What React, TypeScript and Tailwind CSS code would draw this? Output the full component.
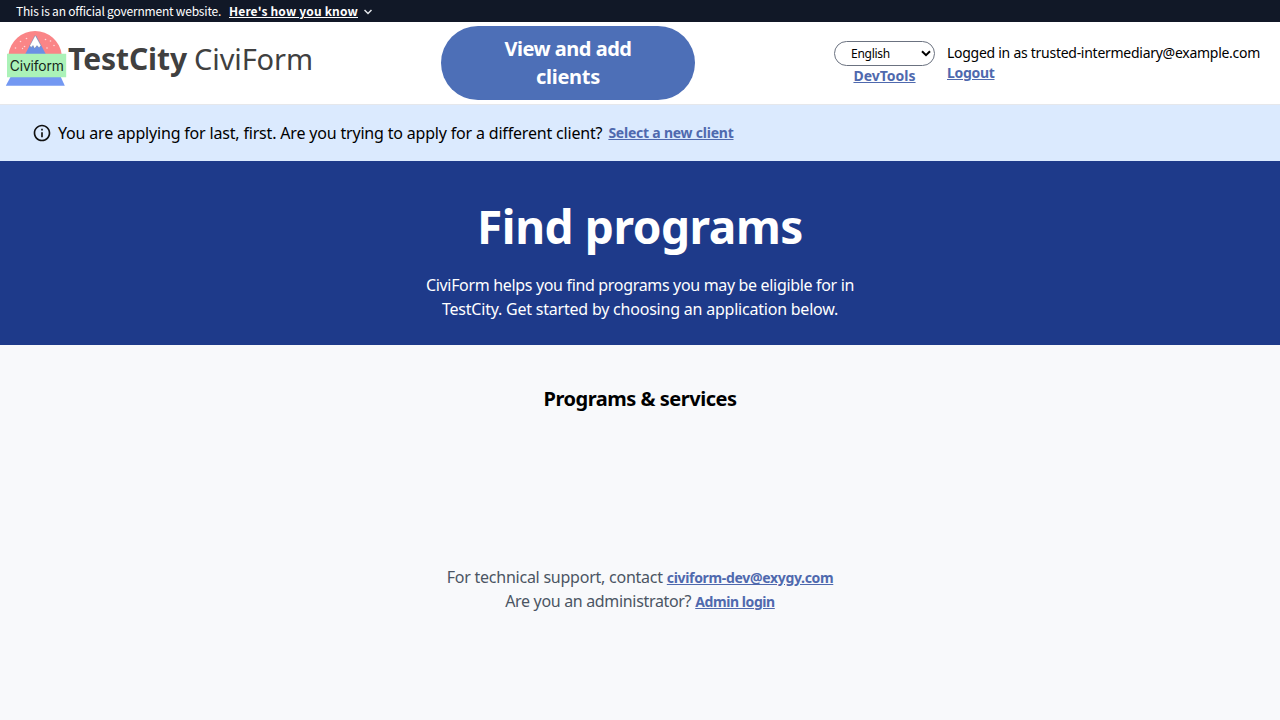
import type { ReactNode } from 'react'

function Link({ children, className = '' }: { children: ReactNode; className?: string }) {
  return (
    <a href="#" className={`text-sm font-bold text-[#4f69ae] underline ${className}`}>
      {children}
    </a>
  )
}

function Logo() {
  return (
    <svg width="68" height="64" viewBox="0 0 68 64" className="shrink-0" aria-hidden="true">
      <path d="M8.5 28.5a26.8 26.8 0 0 1 53.2 0z" fill="#fa8587" />
      <path d="M25 28.5 34.5 10.5q1-1.6 2 0L46 28.5z" fill="#6b90e4" />
      <path
        d="M35.3 9.3 29.8 19.6l1.2 2 2-2.2 1.6 3.2 2.4-3 2.1 2.2 1.8-2.2z"
        fill="#fff"
        stroke="#6b7280"
        strokeWidth="0.35"
      />
      <g fill="#fff" opacity="0.7">
        <circle cx="26.5" cy="12.5" r="0.8" />
        <circle cx="20.5" cy="15.5" r="0.8" />
        <circle cx="24.5" cy="20.5" r="0.8" />
        <circle cx="15.5" cy="22" r="0.8" />
        <circle cx="22.5" cy="22.5" r="0.7" />
        <circle cx="45.5" cy="13.5" r="0.8" />
        <circle cx="50.5" cy="15" r="0.8" />
        <circle cx="47" cy="22" r="0.8" />
        <circle cx="54" cy="19.5" r="0.8" />
      </g>
      <path d="M10.5 51h50.3l4 8.7H5.8z" fill="#7398f2" />
      <path d="M7 27.7h59.2v23.6H7z" fill="#abf2b8" />
      <text x="9.8" y="45.3" fontSize="13.8" textLength="54" fontFamily="Inter, sans-serif" fill="#16281b">
        Civiform
      </text>
    </svg>
  )
}

export default function App() {
  return (
    <div className="flex min-h-screen w-full flex-col bg-[#f8f9fb] font-['Noto_Sans',sans-serif] text-base text-black">
      <div className="flex h-[22px] items-center bg-[#111827] pl-4 font-['Noto_Sans_CJK_SC','Noto_Sans',sans-serif] text-xs text-white">
        <span className="w-[213px] whitespace-nowrap tracking-[-0.2px]">This is an official government website.</span>
        <button className="whitespace-nowrap font-bold tracking-[0.16px] underline">Here's how you know</button>
        <svg width="8" height="6" viewBox="0 0 8 6" fill="none" stroke="#e5e7eb" strokeWidth="1.5" className="ml-1.5 mt-0.5">
          <path d="M.5 1 4 4.5 7.5 1" />
        </svg>
      </div>

      <header className="flex h-[83px] border-b border-[#e5e7eb] bg-white">
        <div className="flex w-[441px] items-start pt-1">
          <Logo />
          <h1 className="whitespace-nowrap pt-[13px] text-[30px] leading-[40px] text-[#404040]">
            <span className="font-bold tracking-[-0.07px]">TestCity</span>
            <span className="ml-[7px] text-[29px] font-normal tracking-[-0.1px]">CiviForm</span>
          </h1>
        </div>
        <button className="mt-1 h-[74px] w-[254px] rounded-[37px] bg-[#4d6fb7] text-xl leading-7 font-bold text-white">
          <span className="block tracking-[-0.49px]">View and add</span>
          <span className="block tracking-[-0.27px]">clients</span>
        </button>
        <div className="ml-[139px] flex w-[101px] flex-col items-center pt-[19px]">
          <div className="flex h-[25px] w-full items-center justify-between rounded-full border border-[#6b7280] pr-[3px] pl-4 text-xs">
            <span className="tracking-[-0.26px]">English</span>
            <svg width="10" height="7" viewBox="0 0 10 7" fill="none" stroke="#000" strokeWidth="2">
              <path d="M1 1.2 5 5.2 9 1.2" />
            </svg>
          </div>
          <Link className="leading-5">DevTools</Link>
        </div>
        <div className="ml-3 pt-[21px] text-sm leading-5">
          <p className="whitespace-nowrap tracking-[-0.27px]">Logged in as trusted-intermediary@example.com</p>
          <Link className="block leading-5 tracking-[-0.31px]">Logout</Link>
        </div>
      </header>

      <div className="flex h-14 items-center bg-[#dbeafe] pl-8">
        <svg width="20" height="20" viewBox="0 0 24 24" fill="#111" className="mr-1.5">
          <path d="M11 7h2v2h-2zm0 4h2v6h-2zm1-9C6.48 2 2 6.48 2 12s4.48 10 10 10 10-4.48 10-10S17.52 2 12 2zm0 18c-4.41 0-8-3.59-8-8s3.59-8 8-8 8 3.59 8 8-3.59 8-8 8z" />
        </svg>
        <p className="whitespace-nowrap tracking-[-0.182px]">
          You are applying for last, first. Are you trying to apply for a different client?
        </p>
        <Link className="ml-[6px] tracking-[-0.23px]">Select a new client</Link>
      </div>

      <section className="h-[184px] bg-[#1e3a8a] pt-[41px] text-center text-white">
        <h2 className="text-[46px] leading-[48px] font-bold tracking-[-0.43px]">Find programs</h2>
        <p className="pt-[23px] leading-6">
          <span className="block tracking-[-0.33px]">CiviForm helps you find programs you may be eligible for in</span>
          <span className="block tracking-[-0.215px]">TestCity. Get started by choosing an application below.</span>
        </p>
      </section>

      <main className="pt-10 text-center">
        <h3 className="text-xl leading-7 font-bold tracking-[-0.48px]">Programs &amp; services</h3>
      </main>

      <footer className="mt-[152px] text-center leading-6 text-[#4b5563]">
        <div className="flex h-6 items-start justify-center gap-1">
          <span className="tracking-[-0.24px]">For technical support, contact</span>
          <Link className="pt-px leading-6 tracking-[-0.325px]">civiform-dev@exygy.com</Link>
        </div>
        <div className="flex h-6 items-start justify-center gap-1">
          <span className="tracking-[-0.33px]">Are you an administrator?</span>
          <Link className="pt-px leading-6 tracking-[-0.42px]">Admin login</Link>
        </div>
      </footer>
    </div>
  )
}
